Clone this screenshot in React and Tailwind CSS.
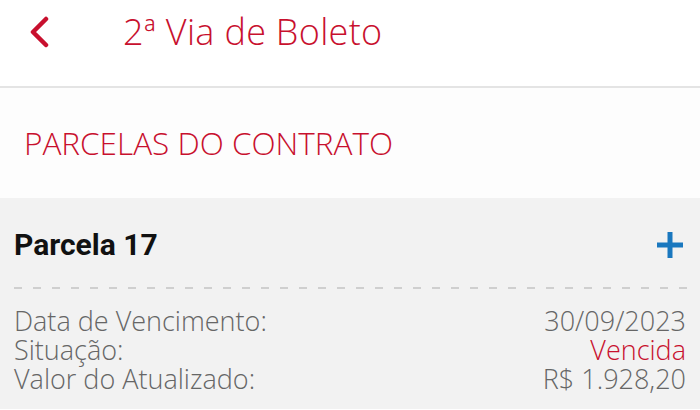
import React from 'react';

const rows = [
  { label: 'Data de Vencimento:', value: '30/09/2023', red: false },
  { label: 'Situação:', value: 'Vencida', red: true },
  { label: 'Valor do Atualizado:', value: 'R$ 1.928,20', red: false },
];

function App() {
  return (
    <div className="w-[700px] h-[410px] overflow-hidden bg-white" style={{ fontFamily: '"Open Sans", sans-serif' }}>
      {/* Header */}
      <div className="h-[88px] flex items-start border-b-2 border-[#e4e4e4]">
        <button className="w-[123px] h-[64px] flex items-center pl-[28px]">
          <svg width="22" height="32" viewBox="0 0 22 32">
            <path d="M18 3 L5 16 L18 29" fill="none" stroke="#c8102e" strokeWidth="4.5" strokeLinecap="round" strokeLinejoin="round" />
          </svg>
        </button>
        <h1 className="text-[36px] leading-[64px] font-light text-[#c8102e] tracking-[0.3px]">2ª Via de Boleto</h1>
      </div>

      {/* Section title */}
      <div className="h-[110px] flex items-center pl-[24px] bg-[#fdfdfd]">
        <h2 className="text-[31.5px] leading-[40px] font-light text-[#c8102e]">PARCELAS DO CONTRATO</h2>
      </div>

      {/* Card */}
      <div className="bg-[#f2f2f2] px-[14px] pt-[29px] pb-4">
        <div className="flex items-center justify-between pr-[1px] h-[36px]">
          <span className="text-[30px] leading-[36px] font-bold text-[#111]" style={{ fontFamily: 'Roboto, sans-serif' }}>Parcela 17</span>
          <svg width="30" height="30" viewBox="0 0 30 30">
            <path d="M15 2 V28 M2 15 H28" stroke="#1a78bf" strokeWidth="5" />
          </svg>
        </div>
        <svg className="mt-[24px] block" width="674" height="2">
          <line x1="0" y1="1" x2="674" y2="1" stroke="#cfcfcf" strokeWidth="2" strokeDasharray="8 11" />
        </svg>
        <div className="mt-[17px]">
          {rows.map((r) => (
            <div key={r.label} className="flex justify-between text-[27px] leading-[29px] font-light">
              <span className="text-[#666]">{r.label}</span>
              <span className={r.red ? 'text-[#c8102e]' : 'text-[#666]'}>{r.value}</span>
            </div>
          ))}
        </div>
      </div>
    </div>
  );
}

export default App;
